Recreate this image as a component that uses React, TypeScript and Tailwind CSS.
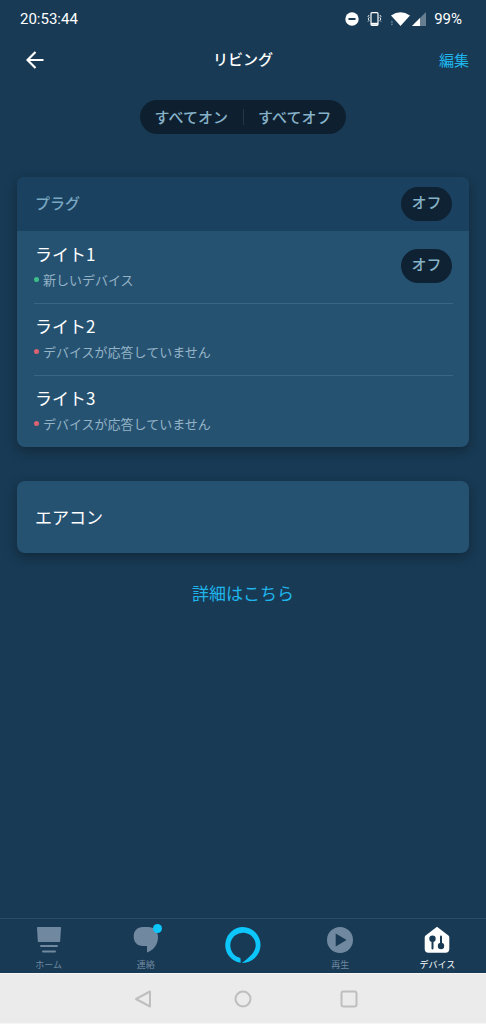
import React from "react";

const devices = [
  { name: "ライト1", status: "新しいデバイス", online: true },
  { name: "ライト2", status: "デバイスが応答していません", online: false },
  { name: "ライト3", status: "デバイスが応答していません", online: false },
];

const HomeIcon = () => (
  <svg width="28" height="28" viewBox="0 0 28 28" fill="currentColor">
    <path d="M3 1h22c.7 0 1 .4 1 1l-.8 13c0 .7-.5 1-1 1H3.800c-.6 0-1-.3-1-1L2 2c0-.6.3-1 1-1Z" />
    <rect x="5" y="19" width="18" height="2" rx="1" />
    <rect x="7" y="24.500" width="14" height="2" rx="1" />
  </svg>
);

const ChatIcon = () => (
  <svg width="28" height="28" viewBox="0 0 28 28" fill="currentColor">
    <path d="M11 1h5c6 0 10 4 10 10 0 8-4.500 13-11 15.600V20h-4C5 20 1.700 16 1.700 10.500S5 1 11 1Z" />
  </svg>
);

const PlayIcon = () => (
  <svg width="28" height="28" viewBox="0 0 28 28" fill="currentColor">
    <path
      fillRule="evenodd"
      d="M14 1a13 13 0 1 1 0 26 13 13 0 0 1 0-26ZM9.700 7.400v13.200L20.600 14Z"
    />
  </svg>
);

const DevicesIcon = () => (
  <svg width="28" height="28" viewBox="0 0 28 28">
    <path
      d="M14 .7 25.400 9.600c.6.500.9 1 .9 1.800V23c0 2.400-1.300 3.700-3.700 3.700H5.400C3 26.700 1.700 25.400 1.700 23V11.400c0-.8.3-1.300.9-1.800Z"
      fill="#ffffff"
    />
    <g fill="#183a54">
      <circle cx="9.500" cy="12.700" r="3.200" />
      <rect x="8.500" y="13" width="2" height="10.500" rx="1" />
      <circle cx="18" cy="20" r="3.200" />
      <rect x="17" y="9.500" width="2" height="10.500" rx="1" />
    </g>
  </svg>
);

const AlexaIcon = () => (
  <svg width="36" height="36" viewBox="0 0 36 36" fill="#0cc6fc">
    <path d="M18 0a18 18 0 0 0-2.400 35.800v-3.600c0-.9-.5-1.400-1.400-1.700A12.700 12.700 0 1 1 30.700 18c0 7-5.500 11.500-13.700 18A18 18 0 1 0 18 0Z" />
  </svg>
);

const StatusIcons = () => (
  <div className="flex items-center">
    <svg width="14" height="14" viewBox="0 0 14 14">
      <circle cx="7" cy="7" r="6.700" fill="#ffffff" />
      <rect x="3.500" y="6" width="7" height="2" fill="#183a54" />
    </svg>
    <svg className="ml-2" width="15" height="14" viewBox="0 0 15 14" fill="none" stroke="#ffffff">
      <rect x="4" y=".7" width="7" height="12.600" rx="1" strokeWidth="1.200" />
      <path d="M4 11.800h7" strokeWidth="2" />
      <path d="M2.200 3 1 4.300 2.200 5.600 1 7l1.200 1.300L1 9.600M12.800 3 14 4.300l-1.200 1.300L14 7l-1.200 1.300L14 9.600" strokeWidth=".9" />
    </svg>
    <svg className="ml-2" width="20" height="14" viewBox="0 0 20 14">
      <path d="M10.500 14 1 3.600Q10.500-3 20 3.600Z" fill="#ffffff" />
      <path d="m.6 10.400 1.300-1.800 1.300 1.800ZM.6 11.800l1.300 1.800 1.300-1.800Z" fill="#6f8799" />
    </svg>
    <svg className="ml-0.5" width="14" height="14" viewBox="0 0 14 14">
      <path d="M14 0v14H0Z" fill="#687f92" />
      <path d="M8 6v8H0Z" fill="#ffffff" />
    </svg>
  </div>
);

const OffButton = ({ label }: { label: string }) => (
  <button
    type="button"
    aria-label={label}
    className="h-[34px] w-[51px] rounded-full bg-[#0e2233] pb-1 text-[15px] leading-5 font-medium text-[#86b2c8]"
  >
    オフ
  </button>
);

const tabs = [
  { label: "ホーム", icon: <HomeIcon /> },
  { label: "連絡", icon: <ChatIcon />, badge: true },
  { label: "", icon: <AlexaIcon /> },
  { label: "再生", icon: <PlayIcon /> },
  { label: "デバイス", icon: <DevicesIcon />, active: true },
];

const App = () => {
  return (
    <div className="flex min-h-screen flex-col bg-[#183a54] font-['Noto_Sans_CJK_JP',sans-serif] text-white">
      <div className="flex h-9 items-center justify-between pr-6 pl-5 pt-0.5 font-[Roboto,sans-serif] text-[15px] leading-5">
        <span>20:53:44</span>
        <div className="flex items-center gap-2">
          <StatusIcons />
          <span>99%</span>
        </div>
      </div>

      <header className="grid h-12 grid-cols-3 items-center px-[17px]">
        <button type="button" aria-label="戻る" className="flex size-9 items-center justify-center">
          <svg width="18" height="18" viewBox="0 0 18 18" fill="none" stroke="#ffffff" strokeWidth="2.200">
            <path d="M17.500 9H2M9.500 1 1.500 9l8 8" />
          </svg>
        </button>
        <h1 className="pb-0.5 text-center text-[15px] leading-5 font-medium">リビング</h1>
        <a href="#edit" className="justify-self-end text-[15px] leading-5 text-[#1fb5ec]">
          編集
        </a>
      </header>

      <main className="flex-1 px-[17px] pt-4">
        <div className="mx-auto flex h-[34px] w-[206px] items-center rounded-full bg-[#0e2030] text-[15px] leading-5 font-medium text-[#86b2c8]">
          <button type="button" className="h-full flex-1">
            すべてオン
          </button>
          <div className="h-4 w-px bg-[#22384a]" />
          <button type="button" className="h-full flex-1">
            すべてオフ
          </button>
        </div>

        <section className="mt-[43px] overflow-hidden rounded-lg bg-[#265272] shadow-[0_4px_12px_rgba(0,0,0,0.3)]">
          <div className="flex h-[54px] items-center justify-between bg-[#1b4160] pr-[17px] pl-[18px]">
            <h2 className="pb-0.5 text-[15px] leading-5 font-medium text-[#78a8c2]">プラグ</h2>
            <OffButton label="プラグ オフ" />
          </div>
          <ul className="pl-[17px]">
            {devices.map((device) => (
              <li
                key={device.name}
                className="mr-4 flex h-[72px] items-center justify-between border-t border-[#3b6584] pr-px pb-1 first:border-transparent"
              >
                <div>
                  <p className="pl-px text-[17px] leading-6">{device.name}</p>
                  <p className="mt-1 flex items-center gap-1 text-[13px] leading-5 text-[#94b3c6]">
                    <span
                      className={
                        device.online
                          ? "size-[5px] rounded-full bg-[#3dbd87]"
                          : "size-[5px] rounded-full bg-[#dc6273]"
                      }
                    />
                    {device.status}
                  </p>
                </div>
                {device.online && <OffButton label={`${device.name} オフ`} />}
              </li>
            ))}
          </ul>
        </section>

        <section className="mt-[34px] flex h-[72px] items-center rounded-lg bg-[#265272] px-[18px] shadow-[0_4px_12px_rgba(0,0,0,0.3)]">
          <h2 className="text-[17px] leading-6">エアコン</h2>
        </section>

        <div className="mt-7 text-center">
          <a href="#more" className="text-[17px] leading-6 text-[#1fb5ec]">
            詳細はこちら
          </a>
        </div>
      </main>

      <nav className="grid h-[55px] grid-cols-5 border-t border-[#2b4c66]">
        {tabs.map((tab, i) => (
          <button
            key={i}
            type="button"
            aria-label={tab.label || "Alexa"}
            className={
              tab.active
                ? "flex flex-col items-center justify-start pt-[7px] text-white"
                : "flex flex-col items-center justify-start pt-[7px] text-[#7089a0]"
            }
          >
            <span className={tab.label ? "relative" : "relative pt-px"}>
              {tab.icon}
              {tab.badge && <span className="absolute -top-0.5 -right-0.5 size-[9px] rounded-full bg-[#0cc6fc]" />}
            </span>
            {tab.label && <span className="mt-[5px] text-[9px] leading-3">{tab.label}</span>}
          </button>
        ))}
      </nav>

      <div className="grid h-[51px] grid-cols-[1fr_auto_1fr] items-center border-y border-[#f6f6f6] bg-[#ebebeb] text-[#bebebe]">
        <button type="button" aria-label="戻る" className="mr-[82px] justify-self-end">
          <svg width="18" height="18" viewBox="0 0 18 18" fill="none" stroke="currentColor" strokeWidth="2">
            <path d="M16 1.500v15L2 9Z" strokeLinejoin="round" />
          </svg>
        </button>
        <button type="button" aria-label="ホーム画面">
          <svg width="18" height="18" viewBox="0 0 18 18" fill="none" stroke="currentColor" strokeWidth="2">
            <circle cx="9" cy="9" r="7.500" />
          </svg>
        </button>
        <button type="button" aria-label="履歴" className="ml-[88px] justify-self-start">
          <svg width="18" height="18" viewBox="0 0 18 18" fill="none" stroke="currentColor" strokeWidth="2">
            <rect x="1.500" y="1.500" width="15" height="15" rx="2" />
          </svg>
        </button>
      </div>
    </div>
  );
};

export default App;
